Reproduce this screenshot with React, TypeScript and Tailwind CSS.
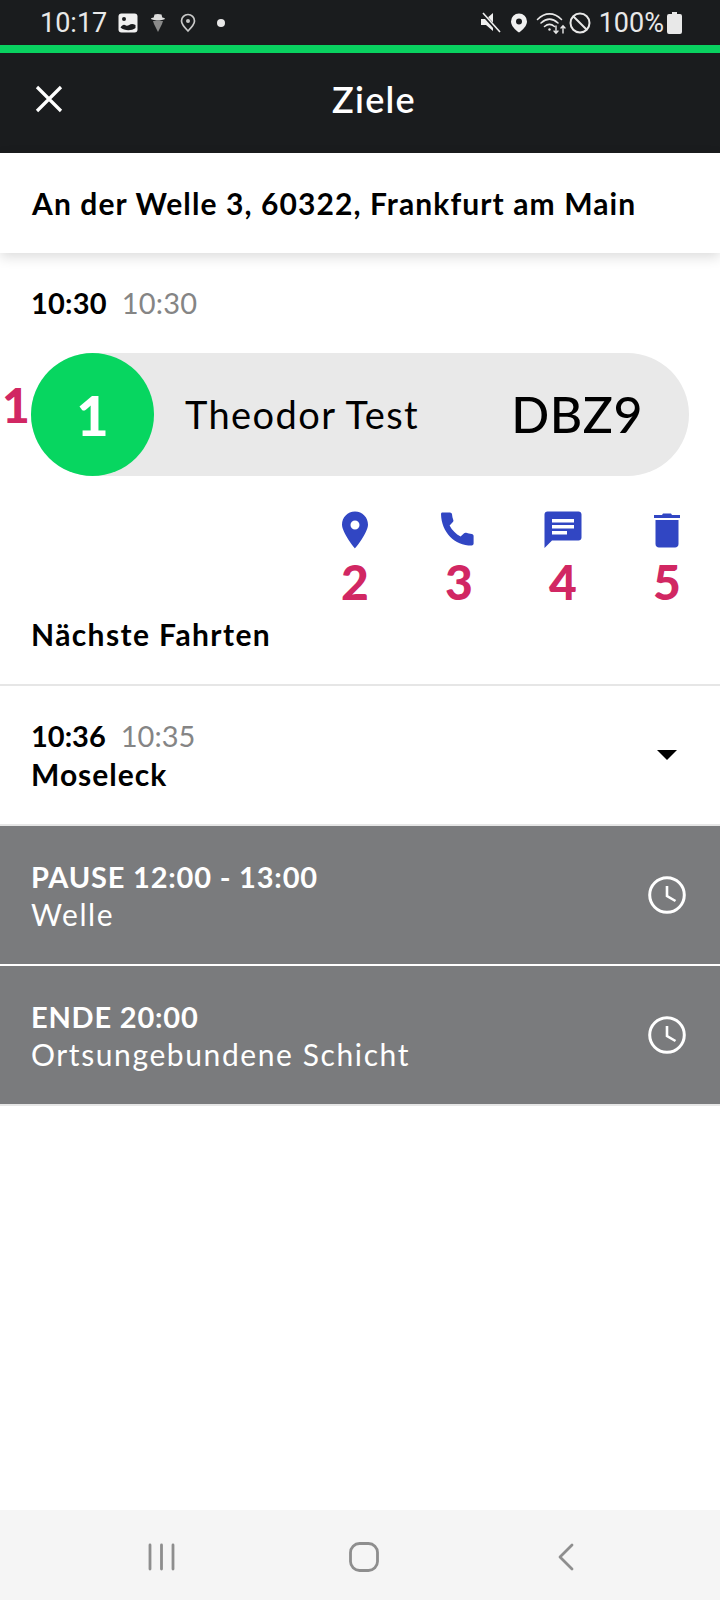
const FONT = "font-['Lato','Open_Sans',sans-serif]";

function StatusIcons() {
  return (
    <div className="flex items-center">
      <svg width="21" height="21" viewBox="0 0 21 21" className="ml-[4px]" fill="none">
        <path d="M1 7h5L13 1v18l-7-6H1z" fill="#f0f0f0" />
        <path d="M2 1l18 20" stroke="#1a1c1e" strokeWidth="3.500" />
        <path d="M3 1l17 19" stroke="#f0f0f0" strokeWidth="1.600" />
      </svg>
      <svg width="18" height="20" viewBox="0 0 18 20" className="ml-[9px]">
        <path fillRule="evenodd" d="M9 0.500a8 8 0 0 1 8 8c0 4.200-4.100 8.400-8 11C5.100 16.900 1 12.700 1 8.500a8 8 0 0 1 8-8zm0 5a3 3 0 1 0 0 6 3 3 0 0 0 0-6z" fill="#f0f0f0" />
      </svg>
      <svg width="32" height="24" viewBox="0 0 32 24" className="ml-[8px]" fill="none" stroke="#e8e8e8" strokeLinecap="round">
        <path d="M1.500 8.500C9 1 18 1 25.500 8.500" strokeWidth="1.600" />
        <path d="M5 12c5.500-5 11.500-5 17 0" strokeWidth="1.600" />
        <path d="M8.500 15.500c3.500-3 6.500-3 10 0" strokeWidth="1.600" />
        <circle cx="13.500" cy="18.500" r="1.200" fill="#e8e8e8" stroke="none" />
        <path d="M20 15v7M18 20l2 2.200 2-2.200M27 22v-7M25 17l2-2.200 2 2.200" strokeWidth="1.400" />
      </svg>
      <svg width="22" height="22" viewBox="0 0 22 22" className="ml-[1px]" fill="none" stroke="#e8e8e8" strokeWidth="2">
        <circle cx="11" cy="11" r="9.500" />
        <path d="M4.500 4.500l13 13" />
      </svg>
    </div>
  );
}

function ClockIcon() {
  return (
    <svg width="38" height="38" viewBox="0 0 38 38" fill="none" stroke="#fff">
      <circle cx="19" cy="19" r="17.300" strokeWidth="3" />
      <path d="M19 10v10l8.500 5" strokeWidth="2.600" />
    </svg>
  );
}

function ActionIcon({ label, children }: { label: string; children: React.ReactNode }) {
  return (
    <div className="flex w-[42px] flex-col items-center">
      <div className="flex h-[44px] items-center justify-center">{children}</div>
      <span className="mt-[5px] text-[48px] leading-[50px] font-black text-[#d12763]">{label}</span>
    </div>
  );
}

function GreyRow({ title, sub }: { title: string; sub: string }) {
  return (
    <div className="flex h-[138px] items-center justify-between bg-[#7a7b7d] pr-[34px] pl-[31px] text-white">
      <div>
        <div className="text-[29px] leading-[38px] font-bold tracking-[0.8px]">{title}</div>
        <div className="text-[30px] leading-[37px] tracking-[1.6px]">{sub}</div>
      </div>
      <ClockIcon />
    </div>
  );
}

export default function App() {
  return (
    <div className={`${FONT} flex h-[1600px] w-[720px] flex-col overflow-hidden bg-white text-black`}>
      {/* status bar */}
      <div className="flex h-[45px] items-center justify-between bg-[#1a1c1e] pr-[38px] pl-[40px] text-[#e8e8e8]">
        <div className="flex items-center">
          <span className="mt-[2px] font-['Roboto',sans-serif] text-[27px] leading-none">10:17</span>
          <svg width="20" height="20" viewBox="0 0 20 20" className="ml-[11px]">
            <rect x="0.500" y="0.500" width="19" height="19" rx="3" fill="#f0f0f0" />
            <circle cx="6" cy="6" r="2" fill="#1a1c1e" />
            <path d="M2.500 14.500c2-3 3.500-3.500 5.500-2 2.500 1.500 4-3.500 9.500-.5v3c-4 3-11 3-15-.5z" fill="#1a1c1e" />
          </svg>
          <svg width="16" height="20" viewBox="0 0 16 20" className="ml-[12px]">
            <path d="M3 8h10l-1 3-4 8-4-8z" fill="#8a8a8a" />
            <path d="M4.500 1.500c1.500-.8 5-.8 7 0l.8 3c1.500.3 2.700.7 2.700 1.300S12 7.500 8 7.500 1 6.500 1 5.800s1.200-1 2.700-1.300z" fill="#dcdcdc" />
          </svg>
          <svg width="16" height="20" viewBox="0 0 16 20" className="ml-[14px]" fill="none" stroke="#c9c9c9" strokeWidth="1.700">
            <path d="M8 1.500a6.500 6.500 0 0 1 6.500 6.500c0 3.500-3.500 7-6.500 10C5 15 1.500 11.500 1.500 8A6.500 6.500 0 0 1 8 1.500z" />
            <circle cx="8" cy="8" r="2" fill="#c9c9c9" stroke="none" />
          </svg>
          <div className="ml-[21px] h-[8px] w-[8px] rounded-full bg-[#e8e8e8]" />
        </div>
        <div className="flex items-center">
          <StatusIcons />
          <span className="mt-[2px] ml-[8px] font-['Roboto',sans-serif] text-[27px] leading-none">100%</span>
          <svg width="15" height="22" viewBox="0 0 15 22" className="ml-[3px]">
            <path d="M5 0h5v2h3a2 2 0 0 1 2 2v16a2 2 0 0 1-2 2H2a2 2 0 0 1-2-2V4a2 2 0 0 1 2-2h3z" fill="#e8e8e8" />
          </svg>
        </div>
      </div>
      <div className="h-[8px] bg-[#09d160]" />

      {/* header */}
      <div className="relative flex h-[100px] items-center justify-center bg-[#1a1c1e] pb-[9px] pl-[28px]">
        <svg width="28" height="28" viewBox="0 0 28 28" className="absolute left-[35px]" stroke="#fff" strokeWidth="3.200">
          <path d="M2 2l24 24M26 2L2 26" />
        </svg>
        <span className="text-[36px] font-semibold tracking-[1.3px] text-white">Ziele</span>
      </div>

      {/* address */}
      <div className="z-10 flex h-[100px] items-center bg-white pl-[32px] shadow-[0_4px_12px_rgba(0,0,0,0.14)]">
        <span className="text-[30px] font-bold tracking-[1.1px]">An der Welle 3, 60322, Frankfurt am Main</span>
      </div>

      {/* current stop */}
      <div className="flex h-[100px] items-center gap-[15px] pl-[31px] text-[29px] tracking-[0.2px]">
        <span className="font-bold">10:30</span>
        <span className="text-[#858585]">10:30</span>
      </div>
      <div className="relative mx-[31px] flex h-[123px] items-center rounded-full bg-[#e9e9e9]">
        <span className="absolute top-[27px] left-[-29px] text-[48px] leading-[50px] font-black text-[#d12763]">1</span>
        <div className="relative flex h-[123px] w-[123px] shrink-0 items-center justify-center rounded-full bg-[#07d660] text-[56px] font-black text-white">1</div>
        <span className="ml-[31px] text-[38px] tracking-[1.4px]">Theodor Test</span>
        <span className="mr-[46px] ml-auto text-[50px] font-medium tracking-[0.5px]">DBZ9</span>
      </div>

      {/* actions */}
      <div className="mt-[32px] flex justify-end gap-[62px] pr-[32px]">
        <ActionIcon label="2">
          <svg width="28" height="38" viewBox="0 0 28 38">
            <path fillRule="evenodd" d="M14 .5C6.500.5 1 6.500 1 13.500 1 22 14 37.500 14 37.500S27 22 27 13.500C27 6.500 21.500.5 14 .5zm0 9a4.500 4.500 0 1 1 0 9 4.500 4.500 0 0 1 0-9z" fill="#3146c3" />
          </svg>
        </ActionIcon>
        <ActionIcon label="3">
          <svg width="36" height="36" viewBox="0 0 36 36">
            <path d="M1.500.500h7.500c1 0 1.800.8 2 1.800.2 2 .6 4 1.300 5.700.3.700.1 1.500-.4 2l-3.300 3.500c2.500 4.800 6.200 8.500 11 11l3.500-3.300c.5-.5 1.300-.7 2-.4 1.800.7 3.700 1.100 5.700 1.300 1 .2 1.800 1 1.800 2v7.500c0 1.100-.9 2-2 2C13.500 33.500.5 20.500 0 2c0-.8.500-1.500 1.500-1.500z" fill="#3146c3" />
          </svg>
        </ActionIcon>
        <ActionIcon label="4">
          <svg width="38" height="38" viewBox="0 0 38 38">
            <path d="M3.500.500h31c1.700 0 3 1.300 3 3v23c0 1.700-1.300 3-3 3H8L.500 37V3.500c0-1.700 1.300-3 3-3z" fill="#3146c3" />
            <path d="M8 8h22v3.500H8zM8 14h22v3.500H8zM8 20h15v3.500H8z" fill="#fff" />
          </svg>
        </ActionIcon>
        <ActionIcon label="5">
          <svg width="28" height="36" viewBox="0 0 28 36">
            <path d="M1 3h8l1-1.500h8L19 3h8v3H1z" fill="#3146c3" />
            <path d="M2.500 8h23v24c0 2-1.500 3.500-3.500 3.500H6c-2 0-3.500-1.500-3.500-3.500z" fill="#3146c3" />
          </svg>
        </ActionIcon>
      </div>

      {/* next trips */}
      <div className="flex h-[79px] items-center border-b-2 border-[#e6e6e6] pb-[23px] pl-[31px] text-[30px] font-bold tracking-[1.4px]">
        Nächste Fahrten
      </div>
      <div className="flex h-[140px] items-center justify-between border-b-2 border-[#e6e6e6] pr-[43px] pl-[31px]">
        <div>
          <div className="flex gap-[15px] text-[29px] leading-[38px] tracking-[0px]">
            <span className="font-bold">10:36</span>
            <span className="text-[#858585]">10:35</span>
          </div>
          <div className="text-[30px] leading-[38px] font-bold tracking-[1px]">Moseleck</div>
        </div>
        <svg width="20" height="10" viewBox="0 0 20 10">
          <path d="M0 0h20L10 10z" fill="#000" />
        </svg>
      </div>

      <GreyRow title="PAUSE 12:00 - 13:00" sub="Welle" />
      <div className="h-[2px] bg-white" />
      <GreyRow title="ENDE 20:00" sub="Ortsungebundene Schicht" />
      <div className="h-[2px] bg-[#e6e6e6]" />

      <div className="flex-1" />

      {/* nav bar */}
      <div className="flex h-[90px] items-center justify-between bg-[#f5f5f5] pt-[4px] pr-[145px] pl-[148px]">
        <svg width="28" height="28" viewBox="0 0 28 28" stroke="#8e8e8e" strokeWidth="2.800" strokeLinecap="round">
          <path d="M2 2v24M13.500 2v24M25 2v24" />
        </svg>
        <svg width="30" height="30" viewBox="0 0 30 30" className="mr-[6px]" fill="none" stroke="#8e8e8e" strokeWidth="2.800">
          <rect x="1.500" y="1.500" width="27" height="27" rx="9" />
        </svg>
        <svg width="18" height="28" viewBox="0 0 18 28" fill="none" stroke="#8e8e8e" strokeWidth="2.800" strokeLinecap="round" strokeLinejoin="round">
          <path d="M15 2L3 14l12 12" />
        </svg>
      </div>
    </div>
  );
}
